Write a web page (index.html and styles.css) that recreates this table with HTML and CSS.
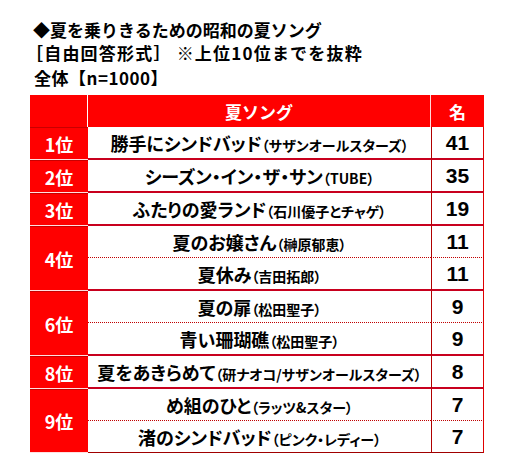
FILE: index.html
```html
<!DOCTYPE html>
<html lang="ja">
<head>
    <meta charset="UTF-8">
    <title>夏を乗りきるための昭和の夏ソング</title>
    <link rel="stylesheet" href="styles.css">
</head>
<body>
    <div class="sheet">
        <p class="title">◆夏を乗りきるための昭和の夏ソング</p>
        <p class="note">［自由回答形式］ ※上位10位までを抜粋</p>
        <p class="base">全体【n=1000】</p>

        <table class="ranking">
            <thead>
                <tr>
                    <th class="rank-head"></th>
                    <th class="song-head">夏ソング</th>
                    <th class="count-head">名</th>
                </tr>
            </thead>
            <tbody>
                <tr class="group">
                    <td class="rank">1位</td>
                    <td class="song">勝手にシンドバッド<span class="artist">（サザンオールスターズ）</span></td>
                    <td class="count">41</td>
                </tr>
                <tr class="group">
                    <td class="rank">2位</td>
                    <td class="song">シーズン・イン・ザ・サン<span class="artist">（TUBE）</span></td>
                    <td class="count">35</td>
                </tr>
                <tr class="group">
                    <td class="rank">3位</td>
                    <td class="song">ふたりの愛ランド<span class="artist">（石川優子とチャゲ）</span></td>
                    <td class="count">19</td>
                </tr>
                <tr class="sub">
                    <td class="rank" rowspan="2">4位</td>
                    <td class="song">夏のお嬢さん<span class="artist">（榊原郁恵）</span></td>
                    <td class="count">11</td>
                </tr>
                <tr class="group">
                    <td class="song">夏休み<span class="artist">（吉田拓郎）</span></td>
                    <td class="count">11</td>
                </tr>
                <tr class="sub">
                    <td class="rank" rowspan="2">6位</td>
                    <td class="song">夏の扉<span class="artist">（松田聖子）</span></td>
                    <td class="count">9</td>
                </tr>
                <tr class="group">
                    <td class="song">青い珊瑚礁<span class="artist">（松田聖子）</span></td>
                    <td class="count">9</td>
                </tr>
                <tr class="group">
                    <td class="rank">8位</td>
                    <td class="song">夏をあきらめて<span class="artist">（研ナオコ/サザンオールスターズ）</span></td>
                    <td class="count">8</td>
                </tr>
                <tr class="sub">
                    <td class="rank" rowspan="2">9位</td>
                    <td class="song">め組のひと<span class="artist">（ラッツ&amp;スター）</span></td>
                    <td class="count">7</td>
                </tr>
                <tr class="last">
                    <td class="song">渚のシンドバッド<span class="artist">（ピンク・レディー）</span></td>
                    <td class="count">7</td>
                </tr>
            </tbody>
        </table>
    </div>
</body>
</html>
```

FILE: styles.css
```css
body {
    margin: 0;
    background: #fff;
    color: #000;
    font-family: "Noto Sans CJK JP", sans-serif;
}
.sheet {
    padding: 18px 0 0 30px;
}
.title, .note, .base {
    margin: 0;
    font-size: 17px;
    font-weight: 700;
}
.title {
    margin-left: 3px;
    line-height: 23px;
}
.note {
    margin-left: -4px;
    letter-spacing: 1.2px;
    line-height: 23px;
}
.base {
    margin-left: 4px;
    margin-bottom: 3px;
    line-height: 28px;
    letter-spacing: 0.5px;
}
.ranking {
    border-collapse: separate;
    border-spacing: 0;
    width: 453px;
    table-layout: fixed;
}
.ranking th, .ranking td {
    padding: 0;
    height: 31px;
    text-align: center;
    vertical-align: middle;
}
.ranking th {
    background: #ff0000;
    color: #fff;
    font-size: 17px;
    font-weight: 700;
    height: 32px;
}
.rank-head {
    width: 57px;
    border-right: 1px solid #fff;
}
.song-head {
    width: 342px;
    border-right: 1px solid #ffdada;
}
.count-head {
    width: 53px;
}
.rank {
    background: #ff0000;
    color: #fff;
    font-size: 18px;
    font-weight: 700;
    border-top: 1px solid #c80000;
    border-bottom: 1px solid #ffe0e0;
}
.song {
    font-size: 18px;
    font-weight: 700;
    white-space: nowrap;
    font-feature-settings: "palt";
}
.artist {
    font-size: 14px;
}
.count {
    font-family: "Liberation Sans", Arial, sans-serif;
    font-size: 21px;
    font-weight: 700;
    padding-right: 6px;
    border-left: 1px solid #b00000;
    border-right: 1px solid #e00000;
}
.group .song, .group .count {
    border-bottom: 2px solid #c8001e;
}
.sub .song, .sub .count {
    border-bottom: 1px dotted #c00000;
}
.last .song, .last .count {
    border-bottom: 1px solid #a00000;
}
```
